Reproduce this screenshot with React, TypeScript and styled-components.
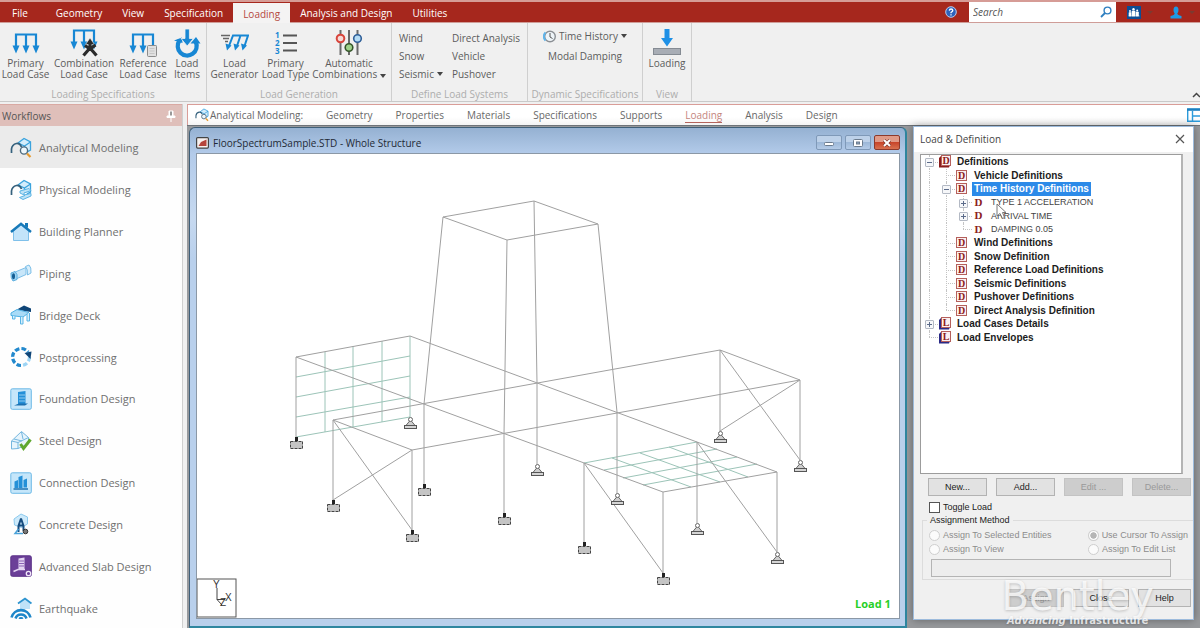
import React from 'react';
import styled, { createGlobalStyle, css } from 'styled-components';

const GlobalStyle = createGlobalStyle`
  *, *::before, *::after { box-sizing: border-box; }
  body { margin: 0; background: #f0f0f0; }
  body, button, input { font-family: "Open Sans", "Noto Sans", sans-serif; font-size: 10px; }
  button { border: 0; padding: 0; background: none; color: inherit; cursor: default; }
  ul { list-style: none; margin: 0; padding: 0; }
  a { color: inherit; text-decoration: none; }
  svg { display: block; flex: none; }
`;

const Shell = styled.div`
  display: flex;
  flex-direction: column;
  height: 100vh;
  min-height: 628px;
  overflow: hidden;
  color: #5c5c5c;
`;

/* ---------- menu bar ---------- */

const MenuBar = styled.header`
  display: flex;
  align-items: stretch;
  height: 23px;
  flex: none;
  background: #a6271d;
  border-top: 2px solid #d69c96;
  border-bottom: 1px solid #cf9d98;
`;

const MenuNav = styled.nav`
  display: flex;
  flex: 1;
`;

const MenuTab = styled.button<{ $active?: boolean; $wide?: boolean }>`
  padding: 2px ${p => (p.$wide ? 12 : 10)}px 0;
  margin-right: ${p => (p.$wide ? 6 : 0)}px;
  font-weight: 400;
  color: #fff;
  ${p => p.$active && css`
    background: #f4f3f3;
    color: #b5483f;
    margin-top: 1px;
    margin-bottom: -1px;
  `}
`;

const HeaderTools = styled.div`
  display: flex;
  align-items: center;
`;

const HelpButton = styled.button`
  margin-right: 12px;
`;

const SearchBox = styled.label`
  display: flex;
  align-items: center;
  width: 147px;
  height: 20px;
  padding: 0 4px;
  background: #fff;
`;

const SearchInput = styled.input`
  flex: 1;
  min-width: 0;
  border: 0;
  padding: 0;
  outline: 0;
  background: transparent;
  font-style: italic;
  &::placeholder { color: #555; opacity: 1; }
`;

const AccountButton = styled.button`
  display: flex;
  align-items: center;
  gap: 6px;
  width: 40px;
  margin-left: 2px;
  padding-left: 9px;
`;

const DimCaret = styled.span`
  border: 3px solid transparent;
  border-top-color: #7c3a30;
  border-bottom: 0;
`;

/* ---------- ribbon ---------- */

const Ribbon = styled.section`
  display: flex;
  flex: none;
  height: 79px;
  background: #f0f0f0;
  border-bottom: 1px solid #c9c9c9;
`;

const RibbonGroup = styled.div<{ $width: number }>`
  display: flex;
  flex-direction: column;
  width: ${p => p.$width}px;
  border-right: 1px solid #cfcfcf;
`;

const GroupBody = styled.div<{ $center?: boolean }>`
  display: flex;
  flex: 1;
  justify-content: ${p => (p.$center ? 'center' : 'flex-start')};
`;

const GroupCaption = styled.div`
  height: 14px;
  line-height: 14px;
  text-align: center;
  white-space: nowrap;
  color: #adadad;
`;

const BigButton = styled.button<{ $width: number }>`
  display: flex;
  flex-direction: column;
  align-items: center;
  width: ${p => p.$width}px;
  padding-top: 4px;
  line-height: 11px;
  white-space: nowrap;
`;

const IconSlot = styled.span`
  display: flex;
  align-items: center;
  height: 31px;
`;

const CommandColumn = styled.div<{ $width?: number; $centered?: boolean }>`
  display: flex;
  flex-direction: column;
  align-items: ${p => (p.$centered ? 'center' : 'flex-start')};
  width: ${p => (p.$width ? `${p.$width}px` : 'auto')};
  padding-top: ${p => (p.$centered ? 3 : 6)}px;
  white-space: nowrap;
`;

const Command = styled.button<{ $tall?: boolean }>`
  display: flex;
  align-items: center;
  gap: 3px;
  height: ${p => (p.$tall ? 20 : 18)}px;
`;

const Caret = styled.i`
  display: inline-block;
  border: 3px solid transparent;
  border-top: 4px solid #444;
  border-bottom: 0;
`;

const CollapseButton = styled.button`
  align-self: flex-end;
  margin: 0 0 3px auto;
`;

/* ---------- body ---------- */

const Body = styled.div`
  display: flex;
  flex: 1;
  min-height: 0;
  padding-top: 2px;
`;

const Sidebar = styled.aside`
  display: flex;
  flex-direction: column;
  width: 183px;
  flex: none;
  margin-right: 4px;
  background: #fefefe;
  border-right: 1px solid #d0d0d0;
`;

const SidebarHeader = styled.h2`
  display: flex;
  justify-content: space-between;
  align-items: center;
  height: 22px;
  flex: none;
  margin: 0;
  padding: 0 6px 0 2px;
  font-size: 10px;
  font-weight: 400;
  color: #555;
  background: #dfbfba;
  border-top: 1px solid #d9a9a3;
`;

const WorkflowList = styled.ul`
  display: flex;
  flex-direction: column;
  flex: 1;
  min-height: 0;
`;

const WorkflowItem = styled.li`
  display: flex;
  flex: 1;
  min-height: 0;
`;

const WorkflowLink = styled.a<{ $active?: boolean }>`
  display: flex;
  flex: 1;
  align-items: center;
  gap: 7px;
  padding: 2px 0 0 10px;
  font-size: 11px;
  color: #707070;
  background: ${p => (p.$active ? '#ebebeb' : 'transparent')};
`;

const Main = styled.main`
  display: flex;
  flex-direction: column;
  flex: 1;
  min-width: 0;
`;

const PageBar = styled.nav`
  display: flex;
  align-items: center;
  height: 21px;
  flex: none;
  gap: 23px;
  padding-left: 7px;
  background: linear-gradient(#fff 60%, #f4f4f4);
  border-top: 1px solid #d99d98;
  border-left: 1px solid #d99d98;
  color: #686868;
`;

const PageTitle = styled.span`
  display: flex;
  align-items: center;
  gap: 1px;
`;

const PageTab = styled.a<{ $active?: boolean }>`
  line-height: 14px;
  color: ${p => (p.$active ? '#c4857e' : 'inherit')};
  border-bottom: 1px solid ${p => (p.$active ? '#b4645c' : 'transparent')};
`;

const LayoutButton = styled.button`
  margin-left: auto;
`;

const Desk = styled.div`
  display: flex;
  flex: 1;
  min-height: 0;
  gap: 6px;
  padding: 0 6px 0 2px;
  background: #97999c;
  border-top: 1px solid #6e7378;
`;

const ModelWindow = styled.section`
  display: flex;
  flex-direction: column;
  flex: 1;
  min-width: 0;
  margin-top: 1px;
  padding: 0 5px 7px 6px;
  background: linear-gradient(#95b1d2, #b3cbea 26px, #c6d9f0 90px, #b9d0ec 130px, #b9d0ec);
  border: 1px solid #3f5f78;
  border-right: 2px solid #2f87a0;
  border-bottom: 2px solid #2f87a0;
  border-radius: 6px 6px 0 0;
`;

const WindowTitle = styled.div`
  display: flex;
  align-items: center;
  gap: 4px;
  height: 25px;
  flex: none;
  padding-top: 4px;
  color: #1f2a36;
`;

const WindowButtons = styled.div`
  display: flex;
  gap: 3px;
  margin-left: auto;
`;

const WindowButton = styled.button<{ $close?: boolean }>`
  display: flex;
  align-items: center;
  justify-content: center;
  width: 26px;
  height: 15px;
  border: 1px solid ${p => (p.$close ? '#8c3a2c' : '#7f99b8')};
  border-radius: 2px;
  background: ${p => (p.$close
    ? 'linear-gradient(#e09a87 45%, #c8452a 50%, #d8714f)'
    : 'linear-gradient(#bdd1e9 45%, #9db8d8 50%, #b4cbe7)')};
`;

const Viewport = styled.div`
  flex: 1;
  min-height: 0;
  background: #fff;
  border: 1px solid #8b98a6;
  svg { width: 100%; height: 100%; }
`;

/* ---------- load & definition panel ---------- */

const Panel = styled.section`
  position: relative;
  display: flex;
  flex-direction: column;
  flex: none;
  width: 281px;
  margin-bottom: 8px;
  background: #f0f0f0;
  border: 1px solid #9dbbdc;
  box-shadow: 0 0 8px rgba(0, 0, 0, 0.35);
  font-family: "Liberation Sans", sans-serif;
  font-size: 9px;
  color: #222;
`;

const PanelTitle = styled.h2`
  display: flex;
  justify-content: space-between;
  align-items: center;
  height: 25px;
  flex: none;
  margin: 0;
  padding: 0 8px 1px 6px;
  background: #fff;
  font: 400 10px "Open Sans", sans-serif;
  color: #444;
`;

const TreeBox = styled.div`
  flex: 1;
  min-height: 0;
  margin: 2px 10px 0 6px;
  background: #fff;
  border: 1px solid #9c9c9c;
  border-right: 2px solid #b4b4b4;
`;

const Tree = styled.ul`
  display: grid;
  grid-auto-rows: 1fr;
  height: 189px;
`;

const TreeRow = styled.li`
  display: flex;
  align-items: stretch;
`;

const Guide = styled.span<{ $shape: 'none' | 'line' | 'tee' | 'end' }>`
  position: relative;
  width: 17px;
  flex: none;
  &::before {
    content: ${p => (p.$shape === 'none' ? 'none' : '""')};
    position: absolute;
    left: 8px;
    top: 0;
    bottom: ${p => (p.$shape === 'end' ? '50%' : '0')};
    border-left: 1px dotted #c4c4c4;
  }
  &::after {
    content: ${p => (p.$shape === 'tee' || p.$shape === 'end' ? '""' : 'none')};
    position: absolute;
    left: 8px;
    right: 0;
    top: 50%;
    border-top: 1px dotted #c4c4c4;
  }
`;

const Expander = styled.button`
  position: absolute;
  z-index: 1;
  left: 4px;
  top: 3px;
  width: 9px;
  height: 9px;
  background: #f6f7f9;
  border: 1px solid #b3b9c4;
  border-radius: 1px;
`;

const TreeIcon = styled.span`
  display: flex;
  align-items: center;
  width: 17px;
  flex: none;
`;

const TreeLabel = styled.span<{ $bold: boolean; $selected?: boolean }>`
  display: flex;
  align-items: center;
  padding: 0 2px;
  font-size: ${p => (p.$bold ? 10 : 9)}px;
  font-weight: ${p => (p.$bold ? 700 : 400)};
  color: ${p => (p.$selected ? '#fff' : p.$bold ? '#1c1c1c' : '#444')};
  background: ${p => (p.$selected ? '#2c8ae8' : 'transparent')};
  white-space: nowrap;
`;

const ButtonRow = styled.div`
  display: flex;
  flex: none;
  justify-content: space-between;
  padding: 4px 2px 0 14px;
`;

const PushButton = styled.button<{ $width: number }>`
  width: ${p => p.$width}px;
  height: 18px;
  font: inherit;
  color: #222;
  background: #e2e2e2;
  border: 1px solid #b3b3b3;
  &:disabled { color: #999; background: #cdcdcd; border-color: #c3c3c3; }
`;

const CheckLabel = styled.label`
  display: flex;
  align-items: center;
  gap: 3px;
  height: 14px;
  flex: none;
  margin: 4px 0 0 15px;
`;

const CheckInput = styled.input`
  appearance: none;
  width: 11px;
  height: 11px;
  margin: 0;
  background: #fff;
  border: 1px solid #555;
`;

const MethodGroup = styled.fieldset`
  flex: none;
  margin: 0 0 0 8px;
  padding: 2px 5px 2px 4px;
  border: 1px solid #dcdcdc;
  border-right: 0;
  min-width: 0;
  legend { padding: 0 3px; line-height: 12px; }
`;

const RadioGrid = styled.div`
  display: grid;
  grid-template-columns: 1fr 100px;
  padding-left: 2px;
`;

const RadioLabel = styled.label`
  display: flex;
  align-items: center;
  gap: 3px;
  height: 14px;
  color: #8c8c8c;
  white-space: nowrap;
`;

const RadioInput = styled.input`
  appearance: none;
  width: 11px;
  height: 11px;
  margin: 0;
  background: #fbfbfb;
  border: 1px solid #cfcfcf;
  border-radius: 50%;
  &:checked { background: radial-gradient(#b5b5b5 45%, #fbfbfb 55%); }
`;

const AssignInput = styled.input`
  display: block;
  width: calc(100% - 21px);
  height: 18px;
  margin: 3px 0 0 4px;
  background: #ededed;
  border: 1px solid #b4b4b4;
`;

const FooterRow = styled.div`
  display: flex;
  flex: none;
  justify-content: flex-end;
  gap: 9px;
  padding: 9px 2px 12px;
`;

const Watermark = styled.div`
  position: absolute;
  right: 39px;
  bottom: -8px;
  text-align: center;
  pointer-events: none;
  color: rgba(255, 255, 255, 0.78);
  text-shadow: 0 1px 3px rgba(0, 0, 0, 0.2);
  font-family: "DejaVu Sans", sans-serif;
`;

const WatermarkName = styled.div`
  font-size: 40px;
  line-height: 36px;
`;

const WatermarkLine = styled.div`
  font-size: 10px;
  font-weight: 700;
  line-height: 13px;
  white-space: nowrap;
`;

const PointerMark = styled.svg`
  position: absolute;
  left: 82px;
  top: 76px;
`;

/* ---------- ribbon icons ---------- */

const blue = '#1787d4';

const LoadArrows = ({ top = 6, children }: { top?: number; children?: React.ReactNode }) => (
  <svg width="28" height="30" viewBox="0 0 28 30">
    <g transform={`translate(0 ${top - 6})`}>
      <path d="M4 20V6.500H24V20M14 6.500V20" stroke={blue} strokeWidth="2.200" fill="none" />
      <path fill={blue} d="M.5 17.500h7L4 25.500zM10.500 17.500h7L14 25.500zM20.500 17.500h7L24 25.500z" />
    </g>
    {children}
  </svg>
);

const PrimaryIcon = () => <LoadArrows />;

const CombinationIcon = () => (
  <LoadArrows top={2}>
    <path d="M20 10L15.500 16.500H24.500z" fill="#2b2b2b" stroke="#f0f0f0" strokeWidth=".6" />
    <path d="M20 14V20L13.500 27.500M20 20L26.500 27.500M15 17.500L20 21L25.500 17" stroke="#2b2b2b" strokeWidth="3.200" fill="none" />
  </LoadArrows>
);

const ReferenceIcon = () => (
  <LoadArrows>
    <rect x="18.500" y="17.500" width="9" height="11" rx="1" fill="#e0e0e0" stroke="#8b8b8b" />
    <path d="M20.500 20.500h5M20.500 23h5M20.500 25.500h5" stroke="#c6c6c6" />
  </LoadArrows>
);

const LoadItemsIcon = () => (
  <svg width="28" height="30" viewBox="0 0 28 30">
    <path d="M6.500 12.500A9.500 9.500 0 1 0 22.800 14" stroke={blue} strokeWidth="4.200" fill="none" />
    <path fill={blue} d="M17.500 15.500L23 9L27.500 15.500zM1 12.500L9 9.500L9.500 15z" />
    <path fill={blue} d="M12 1h4.400v9.500h4L14.200 18L8 10.500h4z" stroke="#f0f0f0" strokeWidth=".8" />
  </svg>
);

const GeneratorIcon = () => (
  <svg width="28" height="30" viewBox="0 0 28 30">
    <path d="M0 7.500H9M2 10.500H8M4 13.500H7" stroke="#666" strokeWidth="1.500" />
    <path d="M8 18L12 7.500H27L23.500 18M19.500 7.500L16 18" stroke={blue} strokeWidth="2" fill="none" />
    <path fill={blue} d="M4.500 15.500l6 2-4.500 5zM12.500 15.500l6 2-4.500 5zM20 15.500l6 2-4.500 5z" />
  </svg>
);

const TypeListIcon = () => (
  <svg width="24" height="30" viewBox="0 0 24 30">
    <path d="M9 7.500H23M9 15H23M9 22.500H23" stroke="#555" strokeWidth="1.800" />
    <g fill={blue} fontSize="8" fontWeight="700" fontFamily="Open Sans, sans-serif">
      <text x="1" y="10">1</text>
      <text x="1" y="18">2</text>
      <text x="1" y="26">3</text>
    </g>
  </svg>
);

const SlidersIcon = () => (
  <svg width="28" height="30" viewBox="0 0 28 30">
    <path d="M5.500 2V27M14 2V27M22.500 2V27" stroke="#6a6a6a" strokeWidth="2" />
    <circle cx="5.500" cy="10.500" r="3.800" fill="#f6d9d6" stroke="#d8453c" strokeWidth="2" />
    <circle cx="14" cy="19.500" r="3.800" fill="#9fd28a" stroke="#35552a" strokeWidth="1.600" />
    <circle cx="22.500" cy="10.500" r="3.800" fill="#b5dcf5" stroke="#2f5f98" strokeWidth="1.600" />
  </svg>
);

const LoadingIcon = () => (
  <svg width="28" height="30" viewBox="0 0 28 30">
    <path fill="#1e90e6" d="M11.500 1h5v9h3.500L14 18.500L8 10h3.500z" />
    <rect x=".5" y="20.500" width="27" height="6" fill="#a8adb5" stroke="#858b93" />
  </svg>
);

const ClockIcon = () => (
  <svg width="13" height="13" viewBox="0 0 13 13">
    <circle cx="7" cy="6.500" r="5.300" fill="#eef4f8" stroke="#8b8f94" strokeWidth="1.400" />
    <path d="M2.500 2.500A5.500 5.500 0 0 0 2.500 10.500" stroke="#5fb4ea" strokeWidth="2" fill="none" />
    <path d="M7 3V7L9.500 8.500" stroke="#555" fill="none" />
  </svg>
);

/* ---------- workflow icons ---------- */

const FrameShape = () => (
  <>
    <path d="M8 6L14 1.500L20.500 5V13L17 15" fill="#d4edfb" stroke="#3ba3dd" strokeWidth="1.300" />
    <path d="M8 6L14.500 9L20.500 5M14.500 9V14" fill="none" stroke="#3ba3dd" strokeWidth="1.300" />
    <path d="M1.500 16V12Q2 7.500 6.500 6.500Q10 6 11.500 10" fill="none" stroke="#35617d" strokeWidth="1.700" />
  </>
);

const AnalyticalIcon = ({ size = 22 }: { size?: number }) => (
  <svg width={size} height={size} viewBox="0 0 22 22">
    <FrameShape />
    <circle cx="14" cy="13.500" r="3.600" fill="#eef7fc" stroke="#4d6b7f" strokeWidth="1.400" />
    <path d="M17 16.500L20.500 20" stroke="#e59a2e" strokeWidth="2.200" />
  </svg>
);

const PhysicalIcon = () => (
  <svg width="22" height="22" viewBox="0 0 22 22">
    <FrameShape />
    <path d="M10 12L19 9.500L21 11.500L14 14V16L21 14.500V17L13 20.500L9.500 18.500L15 16.500L10 14z" fill="#bfe3f7" stroke="#5cb4e4" />
  </svg>
);

const HouseIcon = () => (
  <svg width="22" height="22" viewBox="0 0 22 22">
    <path d="M3.500 10L11 4L18.500 10V19.500H3.500z" fill="#c3e4fa" stroke="#7fc0ea" />
    <path d="M1 11L11 2.800L21 11" fill="none" stroke="#1779b8" strokeWidth="2.400" />
    <path d="M15 2h3v5l-3-2z" fill="#1779b8" />
  </svg>
);

const PipeIcon = () => (
  <svg width="22" height="22" viewBox="0 0 22 22">
    <path d="M4 10.500L16 5.500V12.500L6 17z" fill="#c8e6f9" stroke="#7dbfe8" />
    <path d="M15.500 4.500L19 3Q21.500 5 21 11L17.500 13Q18 7 15.500 4.500z" fill="#d8eefb" stroke="#7dbfe8" />
    <path d="M1 11L5 9.500Q8 11.500 7 17.500L3 19Q.5 16 1 11z" fill="#9fd4f3" stroke="#5caede" />
    <ellipse cx="3.500" cy="14.300" rx="1.500" ry="3" fill="#155d92" />
  </svg>
);

const BridgeIcon = () => (
  <svg width="22" height="22" viewBox="0 0 22 22">
    <path d="M7 5.500L14 1.500L21 4.500V8L14 7z" fill="#0f4577" />
    <path d="M1 9L7 5.500L19 8.500L13 13L1 11.500z" fill="#a9dbf7" stroke="#4eb0e4" />
    <path d="M2.500 12V15H5V12M10.500 13V20H13V13M17 10V17H19.500V9" fill="#d5effc" stroke="#5ab5e6" />
  </svg>
);

const PostIcon = () => (
  <svg width="22" height="22" viewBox="0 0 22 22">
    <circle cx="11" cy="11" r="8.500" fill="none" stroke="#9ed5f5" strokeWidth="3.200" strokeDasharray="4.500 2.180" />
    <path d="M11 19.500A8.500 8.500 0 1 1 18 6" fill="none" stroke="#2388cc" strokeWidth="3.200" strokeDasharray="4.500 2.180" />
    <path d="M14.500 7L21.500 5.500L20.500 13z" fill="#0f4577" />
  </svg>
);

const TileIcon = ({ kind }: { kind: 'foundation' | 'connection' | 'slab' }) => {
  const purple = kind === 'slab';
  return (
    <svg width="22" height="22" viewBox="0 0 22 22">
      <rect x=".8" y=".8" width="20.500" height="20.500" rx="1.500" fill={purple ? '#6b3f98' : '#c5e6fa'} stroke={purple ? '#5a3188' : '#6db9e6'} />
      {kind === 'foundation' && <>
        <path d="M8 4L15.500 3V16H8z" fill="#2490d8" />
        <path d="M4 17.500L9 15.500H18L15 17.500z" fill="#1b70b0" />
        <path d="M9 7h6M9 10h6M9 13h6" stroke="#8fcbf0" />
      </>}
      {kind === 'connection' && <>
        <path d="M4.500 9.500L8 8V16H4.500zM8.500 5L12.500 3.500V16H8.500zM13.500 8L17 6.500V15.500H13.500z" fill="#2490d8" />
        <path d="M3.500 17H18" stroke="#1b70b0" strokeWidth="1.500" />
      </>}
      {purple && <>
        <path d="M8.500 3.500L14.500 2.500V15H8.500z" fill="#e3d4f2" />
        <path d="M9 6h5M9 8.500h5M9 11h5" stroke="#8a62b5" />
        <path d="M3.500 16.500L8 14.500H15" stroke="#e3d4f2" fill="none" strokeWidth="1.500" />
        <circle cx="18.500" cy="18.500" r="2.200" fill="none" stroke="#f1e8f9" strokeWidth="1.300" />
      </>}
    </svg>
  );
};

const SteelIcon = () => (
  <svg width="22" height="22" viewBox="0 0 22 22">
    <path d="M1.500 11L11.500 1.500L18.500 7.500V14L8 18.500L1.500 19z" fill="#e6f4fc" stroke="#75b7df" />
    <path d="M1.500 11L8 12.500L18.500 7.500M8 12.500V18.500M4 9L12 11M11.500 2L13 9" stroke="#75b7df" fill="none" />
    <path d="M10.500 14L13.500 18.500L20.500 9.500" stroke="#5fa82f" strokeWidth="3" fill="none" />
  </svg>
);

const ConcreteIcon = () => (
  <svg width="22" height="22" viewBox="0 0 22 22">
    <path d="M4 6L11 1L17.500 4V11L11.500 14.500L4.500 12z" fill="#cdeafb" stroke="#8ccaee" />
    <path d="M11 5.500L8.500 13V19M11 5.500L13.500 13V18M9 12.500H13" stroke="#174d80" strokeWidth="2" fill="none" />
    <path d="M8.500 16L5 20.500H13" stroke="#4ba3d9" strokeWidth="1.500" fill="none" />
    <circle cx="15.500" cy="18.500" r="2.300" fill="#777" stroke="#333" />
  </svg>
);

const QuakeIcon = () => (
  <svg width="22" height="22" viewBox="0 0 22 22">
    <path d="M10 6V12H20V6L15 2z" fill="#bfe2f8" />
    <path d="M8 6.500L15 1.500L21.500 6.500" stroke="#2b93cf" strokeWidth="1.800" fill="none" />
    <path d="M1.500 20.500A9.800 9.800 0 0 1 20.500 20.500M5.500 21.500A5.800 5.800 0 0 1 16.500 21.500M9.500 22A1.800 1.800 0 0 1 12.500 22" stroke="#1e86c9" strokeWidth="2.600" fill="none" />
  </svg>
);

const workflows: { name: string; icon: React.ReactNode }[] = [
  { name: 'Analytical Modeling', icon: <AnalyticalIcon /> },
  { name: 'Physical Modeling', icon: <PhysicalIcon /> },
  { name: 'Building Planner', icon: <HouseIcon /> },
  { name: 'Piping', icon: <PipeIcon /> },
  { name: 'Bridge Deck', icon: <BridgeIcon /> },
  { name: 'Postprocessing', icon: <PostIcon /> },
  { name: 'Foundation Design', icon: <TileIcon kind="foundation" /> },
  { name: 'Steel Design', icon: <SteelIcon /> },
  { name: 'Connection Design', icon: <TileIcon kind="connection" /> },
  { name: 'Concrete Design', icon: <ConcreteIcon /> },
  { name: 'Advanced Slab Design', icon: <TileIcon kind="slab" /> },
  { name: 'Earthquake', icon: <QuakeIcon /> },
];

/* ---------- structure drawing ---------- */

type Line = [number, number, number, number];

const members: Line[] = [
  [443, 217, 534, 201], [534, 201, 598, 224], [598, 224, 507, 240], [507, 240, 443, 217],
  [443, 217, 424, 404], [534, 201, 537, 383], [598, 224, 617, 412], [507, 240, 504, 434],
  [424, 404, 424, 484], [537, 383, 537, 464], [617, 412, 617, 493], [504, 434, 504, 513],
  [296, 357, 410, 336], [296, 357, 296, 437], [410, 336, 697, 442], [296, 357, 663, 492],
  [333, 420, 720, 350], [412, 450, 800, 380], [333, 420, 412, 450], [720, 350, 800, 380],
  [333, 420, 333, 500], [412, 450, 412, 530], [333, 420, 412, 530], [412, 450, 333, 500],
  [720, 350, 720, 431], [800, 380, 800, 460], [720, 350, 800, 460], [800, 380, 720, 431],
  [697, 442, 777, 472], [663, 492, 777, 472],
  [584, 463, 584, 542], [663, 492, 663, 573], [584, 463, 663, 573],
  [697, 442, 697, 523], [777, 472, 777, 552], [697, 442, 777, 552],
];

const plates: Line[] = [
  [325, 352, 325, 432], [353, 346, 353, 427], [382, 341, 382, 422], [410, 336, 410, 417],
  [296, 377, 410, 356], [296, 397, 410, 376], [296, 417, 410, 397], [296, 437, 410, 417],
  [584, 463, 697, 442], [604, 470, 717, 449], [623, 478, 737, 457], [643, 485, 757, 464],
  [612, 458, 691, 487], [640, 453, 720, 482], [669, 447, 748, 477],
];

const pinned = [[410, 417], [537, 464], [617, 493], [697, 523], [720, 431], [777, 552], [800, 460]];
const fixed = [[296, 437], [333, 500], [412, 530], [424, 484], [504, 513], [584, 542], [663, 573]];

const StructureDrawing = () => (
  <svg viewBox="197 155 702 462" preserveAspectRatio="xMidYMid meet" role="img" aria-label="Whole structure">
    <g stroke="#9cc4b8">
      {plates.map(([a, b, c, d], i) => <line key={i} x1={a} y1={b} x2={c} y2={d} />)}
    </g>
    <g stroke="#a0a0a0">
      {members.map(([a, b, c, d], i) => <line key={i} x1={a} y1={b} x2={c} y2={d} />)}
    </g>
    {fixed.map(([x, y]) => (
      <g key={`${x}-${y}`}>
        <rect x={x - 1} y={y} width="3" height="4" fill="#222" />
        <rect x={x - 5.5} y={y + 4.5} width="12" height="7" fill="#c4c4c4" stroke="#444" strokeDasharray="3 1" />
      </g>
    ))}
    {pinned.map(([x, y]) => (
      <g key={`${x}-${y}`} stroke="#666">
        <path d={`M${x + 0.5} ${y + 3}l-5 6h10z`} fill="#cfcfcf" />
        <rect x={x - 5.5} y={y + 8.5} width="12" height="3" fill="#d5d5d5" stroke="#555" />
        <circle cx={x + 0.5} cy={y + 2.5} r="2" fill="#fff" />
      </g>
    ))}
    <rect x="197" y="579" width="39" height="38" fill="#fff" stroke="#555" />
    <path d="M217 588V599.500M217 599.500H225M217 599.500L222 605" stroke="#444" fill="none" />
    <g fill="#333" fontFamily="Liberation Sans, sans-serif" fontSize="10">
      <text x="213" y="588">Y</text>
      <text x="225" y="601">X</text>
      <text x="220" y="606">Z</text>
    </g>
    <text x="855" y="608" fill="#27cf27" fontFamily="Open Sans, sans-serif" fontSize="11" fontWeight="700">Load 1</text>
  </svg>
);

/* ---------- tree ---------- */

type Shape = 'none' | 'line' | 'tee' | 'end';
type Node = {
  label: string;
  guides: Shape[];
  expander?: '+' | '-';
  icon: 'bookD' | 'bookL' | 'boxD' | 'plainD';
  selected?: boolean;
};

const nodes: Node[] = [
  { label: 'Definitions', guides: ['tee'], expander: '-', icon: 'bookD' },
  { label: 'Vehicle Definitions', guides: ['line', 'tee'], icon: 'boxD' },
  { label: 'Time History Definitions', guides: ['line', 'tee'], expander: '-', icon: 'boxD', selected: true },
  { label: 'TYPE 1 ACCELERATION', guides: ['line', 'line', 'tee'], expander: '+', icon: 'plainD' },
  { label: 'ARRIVAL TIME', guides: ['line', 'line', 'tee'], expander: '+', icon: 'plainD' },
  { label: 'DAMPING 0.05', guides: ['line', 'line', 'end'], icon: 'plainD' },
  { label: 'Wind Definitions', guides: ['line', 'tee'], icon: 'boxD' },
  { label: 'Snow Definition', guides: ['line', 'tee'], icon: 'boxD' },
  { label: 'Reference Load Definitions', guides: ['line', 'tee'], icon: 'boxD' },
  { label: 'Seismic Definitions', guides: ['line', 'tee'], icon: 'boxD' },
  { label: 'Pushover Definitions', guides: ['line', 'tee'], icon: 'boxD' },
  { label: 'Direct Analysis Definition', guides: ['line', 'end'], icon: 'boxD' },
  { label: 'Load Cases Details', guides: ['tee'], expander: '+', icon: 'bookL' },
  { label: 'Load Envelopes', guides: ['end'], icon: 'bookL' },
];

const NodeIcon = ({ kind }: { kind: Node['icon'] }) => {
  const book = kind === 'bookD' || kind === 'bookL';
  return (
    <svg width="13" height="13" viewBox="0 0 13 13">
      {book && <path d="M1 3L3 1V10H12L11 12.500H1z" fill={kind === 'bookD' ? '#8a1c1c' : '#2a2a86'} />}
      {kind !== 'plainD' && (
        <rect x={book ? 3.5 : 1.5} y={book ? 0.5 : 1.5} width={book ? 9 : 10} height="10" fill="#fbf1f0" stroke="#b5605c" />
      )}
      <text
        x={book ? 8 : 6.5}
        y={book ? 9 : 10}
        textAnchor="middle"
        fontFamily="Liberation Serif, serif"
        fontSize={kind === 'plainD' ? 11 : 10}
        fontWeight="700"
        fill="#8c2020"
      >
        {kind === 'bookL' ? 'L' : 'D'}
      </text>
    </svg>
  );
};

const ExpanderMark = ({ open }: { open: boolean }) => (
  <svg width="7" height="7" viewBox="0 0 7 7">
    <path d={open ? 'M1 3.500H6' : 'M1 3.500H6M3.500 1V6'} stroke="#5b6b8a" />
  </svg>
);

const pageTabs = ['Geometry', 'Properties', 'Materials', 'Specifications', 'Supports', 'Loading', 'Analysis', 'Design'];
const menuTabs = ['Geometry', 'View', 'Specification', 'Loading', 'Analysis and Design', 'Utilities'];

export default function App() {
  return (
    <Shell>
      <GlobalStyle />
      <MenuBar>
        <MenuNav>
          <MenuTab $wide>File</MenuTab>
          {menuTabs.map(t => <MenuTab key={t} $active={t === 'Loading'}>{t}</MenuTab>)}
        </MenuNav>
        <HeaderTools>
          <HelpButton aria-label="Help">
            <svg width="12" height="12" viewBox="0 0 12 12">
              <circle cx="6" cy="6" r="5.300" fill="#2e62bd" stroke="#b9cdef" />
              <path d="M4.300 4.600Q4.500 3 6.100 3T7.800 4.600Q7.800 5.400 6 6.500V7.300M6 8.300V9.600" stroke="#fff" strokeWidth="1.300" fill="none" />
            </svg>
          </HelpButton>
          <SearchBox>
            <SearchInput placeholder="Search" aria-label="Search" />
            <svg width="12" height="12" viewBox="0 0 12 12">
              <circle cx="7.500" cy="4.500" r="3.400" fill="none" stroke="#2f7fc0" strokeWidth="1.400" />
              <path d="M5 7L1 11" stroke="#2f7fc0" strokeWidth="1.800" />
            </svg>
          </SearchBox>
          <AccountButton aria-label="Community">
            <svg width="14" height="13" viewBox="0 0 14 13">
              <rect width="14" height="13" fill="#0d4d94" />
              <path d="M2 10V6.500h2V10zM5 10V5h3v5zM9 10V6h2.500v4zM1.500 10H12.500" fill="#fff" stroke="#fff" strokeWidth=".6" />
              <circle cx="3" cy="5" r="1" fill="#fff" /><circle cx="6.500" cy="3.300" r="1.200" fill="#fff" /><circle cx="10.200" cy="4.500" r="1" fill="#fff" />
            </svg>
            <DimCaret />
          </AccountButton>
          <AccountButton aria-label="Account">
            <svg width="14" height="13" viewBox="0 0 14 13">
              <path d="M4.500 4Q4.500 .5 7 .5T9.500 4Q9.500 6.500 8.300 7.500Q8.500 9 12.500 10V12.500H1.500V10Q5.500 9 5.700 7.500Q4.500 6.500 4.500 4z" fill="#1e9be6" />
            </svg>
            <DimCaret />
          </AccountButton>
        </HeaderTools>
      </MenuBar>

      <Ribbon>
        <RibbonGroup $width={207}>
          <GroupBody>
            <BigButton $width={51}><IconSlot><PrimaryIcon /></IconSlot>Primary<br />Load Case</BigButton>
            <BigButton $width={66}><IconSlot><CombinationIcon /></IconSlot>Combination<br />Load Case</BigButton>
            <BigButton $width={52}><IconSlot><ReferenceIcon /></IconSlot>Reference<br />Load Case</BigButton>
            <BigButton $width={36}><IconSlot><LoadItemsIcon /></IconSlot>Load<br />Items</BigButton>
          </GroupBody>
          <GroupCaption>Loading Specifications</GroupCaption>
        </RibbonGroup>
        <RibbonGroup $width={185}>
          <GroupBody>
            <BigButton $width={55}><IconSlot><GeneratorIcon /></IconSlot>Load<br />Generator</BigButton>
            <BigButton $width={47}><IconSlot><TypeListIcon /></IconSlot>Primary<br />Load Type</BigButton>
            <BigButton $width={80}><IconSlot><SlidersIcon /></IconSlot>Automatic<span>Combinations <Caret /></span></BigButton>
          </GroupBody>
          <GroupCaption>Load Generation</GroupCaption>
        </RibbonGroup>
        <RibbonGroup $width={136}>
          <GroupBody $center>
            <CommandColumn $width={53}>
              <Command>Wind</Command>
              <Command>Snow</Command>
              <Command>Seismic <Caret /></Command>
            </CommandColumn>
            <CommandColumn>
              <Command>Direct Analysis</Command>
              <Command>Vehicle</Command>
              <Command>Pushover</Command>
            </CommandColumn>
          </GroupBody>
          <GroupCaption>Define Load Systems</GroupCaption>
        </RibbonGroup>
        <RibbonGroup $width={115}>
          <GroupBody $center>
            <CommandColumn $centered>
              <Command $tall><ClockIcon />Time History <Caret /></Command>
              <Command $tall>Modal Damping</Command>
            </CommandColumn>
          </GroupBody>
          <GroupCaption>Dynamic Specifications</GroupCaption>
        </RibbonGroup>
        <RibbonGroup $width={49}>
          <GroupBody>
            <BigButton $width={48}><IconSlot><LoadingIcon /></IconSlot>Loading</BigButton>
          </GroupBody>
          <GroupCaption>View</GroupCaption>
        </RibbonGroup>
        <CollapseButton aria-label="Collapse ribbon">
          <svg width="8" height="6" viewBox="0 0 8 6"><path d="M1 5L4.500 1.500L8 5" stroke="#444" strokeWidth="1.500" fill="none" /></svg>
        </CollapseButton>
      </Ribbon>

      <Body>
        <Sidebar>
          <SidebarHeader>
            Workflows
            <svg width="10" height="12" viewBox="0 0 10 12">
              <path d="M3 1h4v5h2v1.500H1V6h2zM5 7V12" fill="#fff" stroke="#fff" />
              <path d="M5 1.500V5.500" stroke="#777" strokeWidth="1.500" />
            </svg>
          </SidebarHeader>
          <WorkflowList>
            {workflows.map((w, i) => (
              <WorkflowItem key={w.name}>
                <WorkflowLink href="#" $active={i === 0}>{w.icon}{w.name}</WorkflowLink>
              </WorkflowItem>
            ))}
          </WorkflowList>
        </Sidebar>

        <Main>
          <PageBar>
            <PageTitle><AnalyticalIcon size={14} />Analytical Modeling:</PageTitle>
            {pageTabs.map(t => <PageTab key={t} href="#" $active={t === 'Loading'}>{t}</PageTab>)}
            <LayoutButton aria-label="Layout">
              <svg width="13" height="14" viewBox="0 0 13 14">
                <path d="M.7 1.500H13M.7 1V13.300H13M5.500 3V13M5.500 8H13" stroke="#2b9bdb" strokeWidth="1.400" fill="none" />
                <path d="M0 1.500H13" stroke="#1c7fc0" strokeWidth="2.500" />
              </svg>
            </LayoutButton>
          </PageBar>

          <Desk>
            <ModelWindow>
              <WindowTitle>
                <svg width="13" height="12" viewBox="0 0 13 12">
                  <rect x=".6" y=".6" width="11.800" height="10.500" rx="1" fill="#f7f0ee" stroke="#444" strokeWidth="1.200" />
                  <path d="M2.500 9L5 5L10.500 2.500V9z" fill="#b5443c" />
                </svg>
                FloorSpectrumSample.STD - Whole Structure
                <WindowButtons>
                  <WindowButton aria-label="Minimize">
                    <svg width="10" height="8" viewBox="0 0 10 8"><rect x=".5" y="3.500" width="9" height="3" rx="1" fill="#fff" stroke="#6b7b8d" /></svg>
                  </WindowButton>
                  <WindowButton aria-label="Maximize">
                    <svg width="10" height="8" viewBox="0 0 10 8"><rect x=".5" y=".5" width="9" height="7" rx="1" fill="#fff" stroke="#6b7b8d" /><rect x="3.500" y="3" width="3" height="2" fill="#8da5c2" stroke="#6b7b8d" /></svg>
                  </WindowButton>
                  <WindowButton $close aria-label="Close window">
                    <svg width="10" height="8" viewBox="0 0 10 8"><path d="M2 1L8 7M8 1L2 7" stroke="#7a3328" strokeWidth="3.200" /><path d="M2 1L8 7M8 1L2 7" stroke="#fff" strokeWidth="2" /></svg>
                  </WindowButton>
                </WindowButtons>
              </WindowTitle>
              <Viewport><StructureDrawing /></Viewport>
            </ModelWindow>

            <Panel>
              <PanelTitle>
                Load &amp; Definition
                <button aria-label="Close panel">
                  <svg width="10" height="10" viewBox="0 0 10 10"><path d="M1 1L9 9M9 1L1 9" stroke="#555" strokeWidth="1.200" /></svg>
                </button>
              </PanelTitle>
              <TreeBox>
                <Tree>
                  {nodes.map(n => (
                    <TreeRow key={n.label}>
                      {n.guides.map((g, i) => (
                        <Guide key={i} $shape={g}>
                          {n.expander && i === n.guides.length - 1 && (
                            <Expander aria-label={n.expander === '-' ? 'Collapse' : 'Expand'}>
                              <ExpanderMark open={n.expander === '-'} />
                            </Expander>
                          )}
                        </Guide>
                      ))}
                      <TreeIcon><NodeIcon kind={n.icon} /></TreeIcon>
                      <TreeLabel $bold={n.icon !== 'plainD'} $selected={n.selected}>{n.label}</TreeLabel>
                    </TreeRow>
                  ))}
                </Tree>
              </TreeBox>
              <ButtonRow>
                <PushButton $width={59}>New...</PushButton>
                <PushButton $width={59}>Add...</PushButton>
                <PushButton $width={59} disabled>Edit ...</PushButton>
                <PushButton $width={59} disabled>Delete...</PushButton>
              </ButtonRow>
              <CheckLabel><CheckInput type="checkbox" />Toggle Load</CheckLabel>
              <MethodGroup>
                <legend>Assignment Method</legend>
                <RadioGrid>
                  <RadioLabel><RadioInput type="radio" name="method" disabled />Assign To Selected Entities</RadioLabel>
                  <RadioLabel><RadioInput type="radio" name="method" disabled defaultChecked />Use Cursor To Assign</RadioLabel>
                  <RadioLabel><RadioInput type="radio" name="method" disabled />Assign To View</RadioLabel>
                  <RadioLabel><RadioInput type="radio" name="method" disabled />Assign To Edit List</RadioLabel>
                </RadioGrid>
                <AssignInput type="text" aria-label="Assignment list" disabled />
              </MethodGroup>
              <FooterRow>
                <PushButton $width={56} disabled>Assign</PushButton>
                <PushButton $width={56}>Close</PushButton>
                <PushButton $width={53}>Help</PushButton>
              </FooterRow>
              <Watermark aria-hidden="true">
                <WatermarkName>Bentley</WatermarkName>
                <WatermarkLine><em>Advancing</em> Infrastructure</WatermarkLine>
              </Watermark>
              <PointerMark width="12" height="18" viewBox="0 0 12 18" aria-hidden="true">
                <path d="M1 1V13L4 10.500L6.500 15.500L8.500 14.500L6.500 9.500H10z" fill="#fff" stroke="#777" />
              </PointerMark>
            </Panel>
          </Desk>
        </Main>
      </Body>
    </Shell>
  );
}
